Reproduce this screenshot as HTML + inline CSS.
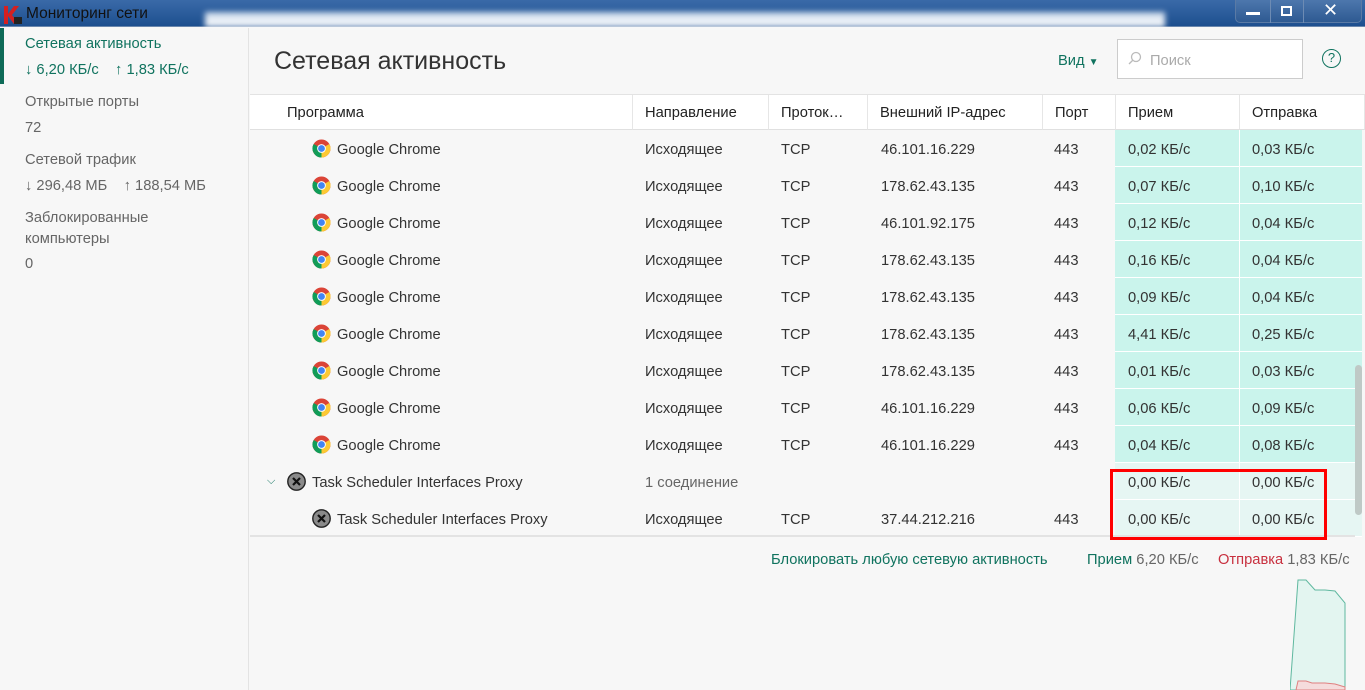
<!DOCTYPE html>
<html><head><meta charset="utf-8"><style>
*{margin:0;padding:0;box-sizing:border-box}
body{width:1365px;height:690px;overflow:hidden;background:#f7f7f7;font-family:"Liberation Sans","DejaVu Sans",sans-serif;font-size:14.7px;color:#333;position:relative}
.a{position:absolute;white-space:nowrap}
.tb{position:absolute;left:0;top:0;width:1365px;height:27px;background:linear-gradient(180deg,#3a6aa8,#1d4f8f);border-bottom:1px solid #6a87ad}
.band{position:absolute;left:205px;top:12px;width:960px;height:15px;background:linear-gradient(180deg,#c9d8ea,#fff);filter:blur(3px)}
.g{color:#10735f}
.row{position:absolute;left:250px;width:1112px;height:37px}
.c{position:absolute;top:12px}
.rx{position:absolute;left:865px;top:0;width:124px;height:37px;background:#caf4ec;border-bottom:1px solid #fff}
.tx{position:absolute;left:989px;top:0;width:123px;height:37px;background:#caf4ec;border-left:1px solid #fff;border-bottom:1px solid #fff}
.lt{background:#e6f6f3}
.hd{position:absolute;top:95px;height:35px;background:#fff;border-right:1px solid #e6e6e6;border-bottom:1px solid #e0e0e0;padding:10px 0 0 12px;color:#222}
</style></head><body>
<div class="tb"><div class="band"></div>
<svg class="a" style="left:2px;top:4px" width="22" height="22" viewBox="0 0 22 22"><path d="M2 2h4v8l6-8h5l-7 9 7 9h-5l-6-8v8H2z" fill="#d42020"/><rect x="12" y="13" width="8" height="7" fill="#222"/></svg>
<div class="a" style="left:26px;top:5px;font-size:15.5px;color:#111">Мониторинг сети</div>
<div class="a" style="left:1235px;top:0;width:127px;height:23px;border:1px solid #5a7aa5;border-top:none;border-radius:0 0 5px 5px;background:linear-gradient(180deg,#4d77ad,#2e5a92)"></div>
<div class="a" style="left:1270px;top:0;width:1px;height:23px;background:#6d8bb3"></div>
<div class="a" style="left:1303px;top:0;width:1px;height:23px;background:#6d8bb3"></div>
<div class="a" style="left:1246px;top:12px;width:14px;height:3px;background:#fff"></div>
<div class="a" style="left:1281px;top:6px;width:11px;height:10px;border:2px solid #fff"></div>
<div class="a" style="left:1323px;top:0px;color:#fff;font-size:18px;font-weight:bold">✕</div>
</div>
<div class="a" style="left:248px;top:28px;width:1px;height:662px;background:#e3e3e3"></div>
<div class="a" style="left:0;top:28px;width:4px;height:56px;background:#0e6b58"></div>
<div class="a g" style="left:25px;top:36px">Сетевая активность</div>
<div class="a g" style="left:25px;top:62px">↓ 6,20 КБ/с &nbsp;&nbsp;&nbsp;↑ 1,83 КБ/с</div>
<div class="a" style="left:25px;top:94px;color:#666">Открытые порты</div>
<div class="a" style="left:25px;top:120px;color:#666">72</div>
<div class="a" style="left:25px;top:152px;color:#666">Сетевой трафик</div>
<div class="a" style="left:25px;top:178px;color:#666">↓ 296,48 МБ &nbsp;&nbsp;&nbsp;↑ 188,54 МБ</div>
<div class="a" style="left:25px;top:210px;color:#666">Заблокированные</div>
<div class="a" style="left:25px;top:231px;color:#666">компьютеры</div>
<div class="a" style="left:25px;top:256px;color:#666">0</div>
<div class="a" style="left:274px;top:47px;font-size:25px;color:#333">Сетевая активность</div>
<div class="a g" style="left:1058px;top:53px">Вид <span style="font-size:10px">▼</span></div>
<div class="a" style="left:1117px;top:39px;width:186px;height:40px;background:#fff;border:1px solid #ccc"></div>
<svg class="a" style="left:1128px;top:51px" width="14" height="14"><circle cx="8" cy="6" r="4.5" fill="none" stroke="#bbb" stroke-width="1.3"/><path d="M5 9L1 13" stroke="#bbb" stroke-width="1.3"/></svg>
<div class="a" style="left:1150px;top:53px;color:#aaa">Поиск</div>
<div class="a" style="left:1322px;top:49px;width:19px;height:19px;border:1.5px solid #10735f;border-radius:50%;color:#10735f;text-align:center;font-size:13px;line-height:16px">?</div>
<div class="a" style="left:250px;top:94px;width:1115px;height:1px;background:#e3e3e3"></div>
<div class="hd" style="left:250px;width:383px;padding-left:37px">Программа</div>
<div class="hd" style="left:633px;width:136px">Направление</div>
<div class="hd" style="left:769px;width:99px">Проток…</div>
<div class="hd" style="left:868px;width:175px">Внешний IP-адрес</div>
<div class="hd" style="left:1043px;width:73px">Порт</div>
<div class="hd" style="left:1116px;width:124px">Прием</div>
<div class="hd" style="left:1240px;width:125px">Отправка</div>
<div id="rows"></div>
<div class="a" style="left:250px;top:535px;width:1105px;height:2px;background:#e3e3e3"></div>
<div class="a" style="left:1355px;top:365px;width:7px;height:150px;background:#bfc9c6;border-radius:4px"></div>
<div class="a" style="left:1110px;top:469px;width:217px;height:71px;border:3px solid #f00"></div>
<div class="a g" style="left:771px;top:552px">Блокировать любую сетевую активность</div>
<div class="a" style="left:1087px;top:552px;color:#666"><span class="g">Прием</span> 6,20 КБ/с</div>
<div class="a" style="left:1218px;top:552px;color:#666"><span style="color:#c8303f">Отправка</span> 1,83 КБ/с</div>
<svg class="a" style="left:1290px;top:575px" width="75" height="115"><path d="M0 115L8 5H16L25 15H35L45 16L55 28V115Z" fill="#e3f5f0" stroke="#5fb89f" stroke-width="1"/><path d="M6 115L8 106H16L22 108H35L45 109L55 112V115Z" fill="#f5dcdc" stroke="#e08080" stroke-width="1"/></svg>
<script>
var d=[["46.101.16.229","0,02","0,03"],["178.62.43.135","0,07","0,10"],["46.101.92.175","0,12","0,04"],["178.62.43.135","0,16","0,04"],["178.62.43.135","0,09","0,04"],["178.62.43.135","4,41","0,25"],["178.62.43.135","0,01","0,03"],["46.101.16.229","0,06","0,09"],["46.101.16.229","0,04","0,08"]];
var chrome='<svg class="a" style="left:62px;top:9px" width="19" height="19" viewBox="0 0 20 20"><circle cx="10" cy="10" r="9.5" fill="#db4437"/><path d="M10 10L1.8 14.75A9.5 9.5 0 0 0 10 19.5z" fill="#0f9d58"/><path d="M10 10L1.8 14.75A9.5 9.5 0 0 1 1.8 5.25z" fill="#0f9d58"/><path d="M10 10L18.2 5.25A9.5 9.5 0 0 1 10 19.5z" fill="#fcc934"/><circle cx="10" cy="10" r="4.6" fill="#fff"/><circle cx="10" cy="10" r="3.6" fill="#4285f4"/></svg>';
function x(l){return '<svg class="a" style="left:'+l+'px;top:9px" width="19" height="19"><circle cx="9.5" cy="9.5" r="8.7" fill="#8a8a8a" stroke="#222" stroke-width="1.4"/><path d="M6 6L13 13M13 6L6 13" stroke="#111" stroke-width="2.2"/></svg>';}
var h='';
d.forEach(function(r,i){h+='<div class="row" style="top:'+(130+37*i)+'px"><div class="rx"></div><div class="tx"></div>'+chrome+'<div class="c" style="left:87px">Google Chrome</div><div class="c" style="left:395px">Исходящее</div><div class="c" style="left:531px">TCP</div><div class="c" style="left:631px">'+r[0]+'</div><div class="c" style="left:804px">443</div><div class="c" style="left:878px">'+r[1]+' КБ/с</div><div class="c" style="left:1002px">'+r[2]+' КБ/с</div></div>';});
h+='<div class="row" style="top:463px"><div class="rx lt"></div><div class="tx lt"></div><div class="c" style="left:17px;color:#10735f;font-size:11px;top:12px">⌵</div>'+x(37)+'<div class="c" style="left:62px">Task Scheduler Interfaces Proxy</div><div class="c" style="left:395px;color:#666">1 соединение</div><div class="c" style="left:878px">0,00 КБ/с</div><div class="c" style="left:1002px">0,00 КБ/с</div></div>';
h+='<div class="row" style="top:500px"><div class="rx lt"></div><div class="tx lt"></div>'+x(62)+'<div class="c" style="left:87px">Task Scheduler Interfaces Proxy</div><div class="c" style="left:395px">Исходящее</div><div class="c" style="left:531px">TCP</div><div class="c" style="left:631px">37.44.212.216</div><div class="c" style="left:804px">443</div><div class="c" style="left:878px">0,00 КБ/с</div><div class="c" style="left:1002px">0,00 КБ/с</div></div>';
document.getElementById('rows').innerHTML=h;
</script>
</body></html>
